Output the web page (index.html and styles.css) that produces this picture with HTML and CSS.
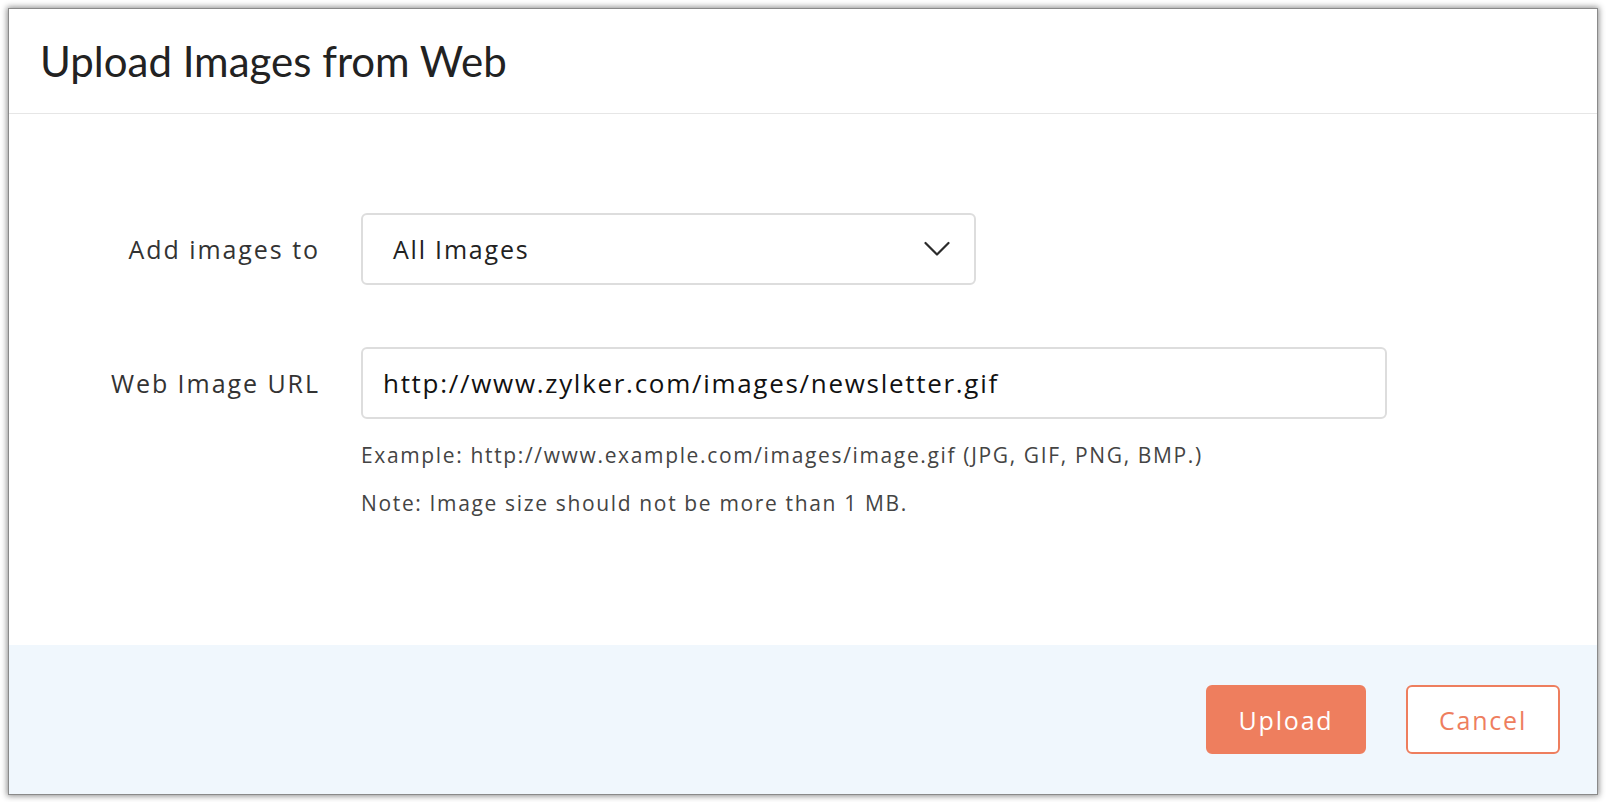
FILE: index.html
```html
<!DOCTYPE html>
<html lang="en">
<head>
<meta charset="utf-8">
<title>Upload Images from Web</title>
<link rel="stylesheet" href="styles.css">
</head>
<body>
<div class="dialog">
  <div class="dialog-header">
    <h1 class="dialog-title">Upload Images from Web</h1>
  </div>
  <div class="dialog-body">
    <div class="form-grid">
      <label class="field-label">Add images to</label>
      <div class="select-box">
        <span class="select-value">All Images</span>
        <svg class="chevron" width="26" height="16" viewBox="0 0 26 16" aria-hidden="true">
          <path d="M1.5 2 L13 13.5 L24.5 2" fill="none" stroke="#2b2b2b" stroke-width="2.2" stroke-linecap="round" stroke-linejoin="round"/>
        </svg>
      </div>
      <label class="field-label">Web Image URL</label>
      <div class="url-field">
        <div class="text-input">http://www.zylker.com/images/newsletter.gif</div>
        <p class="hint">Example: http://www.example.com/images/image.gif (JPG, GIF, PNG, BMP.)</p>
        <p class="hint">Note: Image size should not be more than 1 MB.</p>
      </div>
    </div>
  </div>
  <div class="dialog-footer">
    <button class="btn btn-primary">Upload</button>
    <button class="btn btn-secondary">Cancel</button>
  </div>
</div>
</body>
</html>
```

FILE: styles.css
```css
* { box-sizing: border-box; }

html, body {
  margin: 0;
  padding: 0;
  background: #ffffff;
}

body {
  font-family: "Open Sans", "Liberation Sans", sans-serif;
  color: #333333;
  padding: 8px 8px 7px 8px;
}

.dialog {
  width: 1590px;
  height: 787px;
  background: #ffffff;
  border: 1px solid #8a8a8a;
  box-shadow: 0 0 6px 1px rgba(0, 0, 0, 0.45);
  display: flex;
  flex-direction: column;
}

.dialog-header {
  height: 105px;
  border-bottom: 1px solid #e6e6e6;
  display: flex;
  align-items: center;
  padding-left: 31px;
  flex: none;
}

.dialog-title {
  margin: 0;
  font-family: "Lato", "Open Sans", sans-serif;
  font-size: 42px;
  font-weight: 400;
  color: #222222;
  letter-spacing: 0;
}

.dialog-body {
  flex: 1;
  padding-top: 99px;
}

.form-grid {
  display: grid;
  grid-template-columns: 309px 1026px;
  column-gap: 43px;
  row-gap: 62px;
  align-items: start;
}

.field-label {
  height: 72px;
  display: flex;
  align-items: center;
  justify-content: flex-end;
  font-size: 25px;
  color: #333333;
  letter-spacing: 1.95px;
  margin-right: -2px;
}

.select-box {
  width: 615px;
  height: 72px;
  border: 2px solid #dddddd;
  border-radius: 6px;
  display: flex;
  align-items: center;
  justify-content: space-between;
  padding: 0 24px 0 30px;
}

.select-value {
  font-size: 25px;
  color: #222222;
  letter-spacing: 1.8px;
}

.chevron {
  display: block;
}

.url-field {
  display: flex;
  flex-direction: column;
}

.text-input {
  width: 1026px;
  height: 72px;
  border: 2px solid #dddddd;
  border-radius: 6px;
  display: flex;
  align-items: center;
  padding: 0 20px;
  font-size: 26px;
  color: #111111;
  letter-spacing: 1.7px;
}

.hint {
  margin: 0;
  font-size: 21px;
  line-height: 48px;
  color: #444444;
  letter-spacing: 1.65px;
}

.text-input + .hint {
  margin-top: 12px;
}

.dialog-footer {
  height: 149px;
  flex: none;
  background: #f0f7fd;
  display: flex;
  align-items: center;
  justify-content: flex-end;
  gap: 40px;
  padding-right: 37px;
}

.btn {
  height: 69px;
  border-radius: 6px;
  font-family: inherit;
  font-size: 25px;
  letter-spacing: 1.8px;
  cursor: pointer;
}

.btn-primary {
  width: 160px;
  background: #ee7e5e;
  border: 2px solid #ee7e5e;
  color: #ffffff;
}

.btn-secondary {
  width: 154px;
  background: #ffffff;
  border: 2px solid #ee7e5e;
  color: #ee7e5e;
}
```
